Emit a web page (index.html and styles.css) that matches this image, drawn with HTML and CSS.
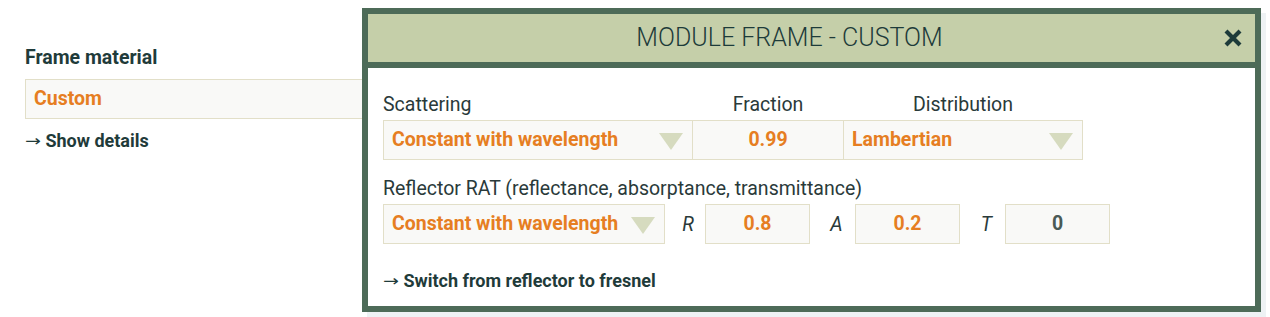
FILE: index.html
```html
<!DOCTYPE html>
<html lang="en">
<head>
    <meta charset="UTF-8">
    <title>Module frame - custom</title>
    <link rel="stylesheet" href="styles.css">
</head>
<body>
    <div class="page">
        <div class="field">
            <label class="field-label">Frame material</label>
            <div class="field-value">Custom</div>
            <a class="link"><span class="arrow">&rarr;</span> Show details</a>
        </div>
    </div>

    <div class="modal">
        <div class="modal-header">
            <div class="modal-title">MODULE FRAME - CUSTOM</div>
            <div class="modal-close">
                <svg width="18" height="18" viewBox="0 0 18 18">
                    <path d="M2 2 L16 16 M16 2 L2 16" stroke="#1d3b3a" stroke-width="4.2" stroke-linecap="butt"/>
                </svg>
            </div>
        </div>
        <div class="modal-body">
            <div class="row-labels">
                <span class="lbl-scatter">Scattering</span>
                <span class="lbl-fraction">Fraction</span>
                <span class="lbl-distrib">Distribution</span>
            </div>
            <div class="row joined">
                <div class="select w-scatter">Constant with wavelength<span class="caret"></span></div>
                <div class="input w-fraction">0.99</div>
                <div class="select w-distrib">Lambertian<span class="caret"></span></div>
            </div>

            <div class="row-labels second">
                <span>Reflector RAT (reflectance, absorptance, transmittance)</span>
            </div>
            <div class="row">
                <div class="select w-rat">Constant with wavelength<span class="caret"></span></div>
                <span class="letter l-r">R</span>
                <div class="input w-num">0.8</div>
                <span class="letter">A</span>
                <div class="input w-num">0.2</div>
                <span class="letter">T</span>
                <div class="input w-num zero">0</div>
            </div>

            <a class="link switch"><span class="arrow">&rarr;</span> Switch from reflector to fresnel</a>
        </div>
    </div>
</body>
</html>
```

FILE: styles.css
```css
* {
    margin: 0;
    padding: 0;
    box-sizing: border-box;
}

body {
    font-family: Roboto, 'Liberation Sans', sans-serif;
    background: #fff;
    color: #1f3b3a;
    width: 1270px;
    height: 317px;
    overflow: hidden;
    position: relative;
}

.page {
    padding: 46px 0 0 25px;
}

.field-label {
    display: block;
    font-size: 19.5px;
    font-weight: 700;
    color: #1f3b3a;
    line-height: 24px;
}

.field-value {
    margin-top: 9px;
    width: 420px;
    height: 40px;
    padding: 0 8px;
    background: #f9f9f7;
    border: 1px solid #e2dfc8;
    color: #e67e22;
    font-weight: 700;
    font-size: 19.5px;
    line-height: 38px;
}

.link {
    display: block;
    margin-top: 10px;
    font-size: 18px;
    font-weight: 700;
    color: #1f3b3a;
    line-height: 22px;
}

.arrow {
    font-family: 'DejaVu Sans', sans-serif;
    font-weight: 400;
    font-size: 19px;
    display: inline-block;
    transform: scaleY(0.8);
}

/* modal overlay */
.modal {
    position: absolute;
    left: 362px;
    top: 8px;
    width: 899px;
    height: 304px;
    border: 6px solid #4d6b58;
    background: #fff;
    box-shadow: 5px 5px 0 #eef2f4;
}

.modal-header {
    display: flex;
    height: 54px;
    background: #c5cfa9;
    border-bottom: 6px solid #4d6b58;
}

.modal-title {
    flex: 1;
    text-align: center;
    font-family: Roboto, 'Open Sans', sans-serif;
    font-weight: 300;
    font-size: 25px;
    color: #1d3b3a;
    line-height: 48px;
}

.modal-close {
    width: 44px;
    display: flex;
    align-items: center;
    justify-content: center;
    padding-bottom: 1px;
}

.modal-body {
    padding: 25px 15px 0 15px;
    font-size: 19.5px;
    color: #2a3a3a;
}

.row-labels {
    display: flex;
    line-height: 24px;
}

.row-labels.second {
    margin-top: 17px;
}

.lbl-scatter { width: 310px; }
.lbl-fraction { width: 150px; text-align: center; }
.lbl-distrib { width: 240px; text-align: center; }

.row {
    display: flex;
    align-items: center;
    margin-top: 3px;
}

.select,
.input {
    height: 40px;
    background: #f9f9f7;
    border: 1px solid #e2dfc8;
    font-weight: 700;
    font-size: 19.5px;
    color: #e67e22;
    line-height: 38px;
}

.select {
    position: relative;
    padding: 0 8px;
}

.input {
    text-align: center;
}

.joined .input {
    border-left: none;
    border-right: none;
}

.w-scatter { width: 310px; }
.w-fraction { width: 150px; }
.w-distrib { width: 240px; }
.w-rat { width: 282px; }
.w-num { width: 105px; }

.caret {
    position: absolute;
    right: 9px;
    top: 12px;
    width: 0;
    height: 0;
    border-left: 12px solid transparent;
    border-right: 12px solid transparent;
    border-top: 17px solid #d6dbbf;
}

.letter {
    width: 45px;
    padding-left: 8px;
    text-align: center;
    font-style: italic;
    font-size: 19.5px;
    color: #2a3a3a;
}

.letter.l-r {
    width: 40px;
    padding-left: 6px;
}

.zero {
    color: #4a5a55;
}

.switch {
    margin-top: 25px;
}
```
